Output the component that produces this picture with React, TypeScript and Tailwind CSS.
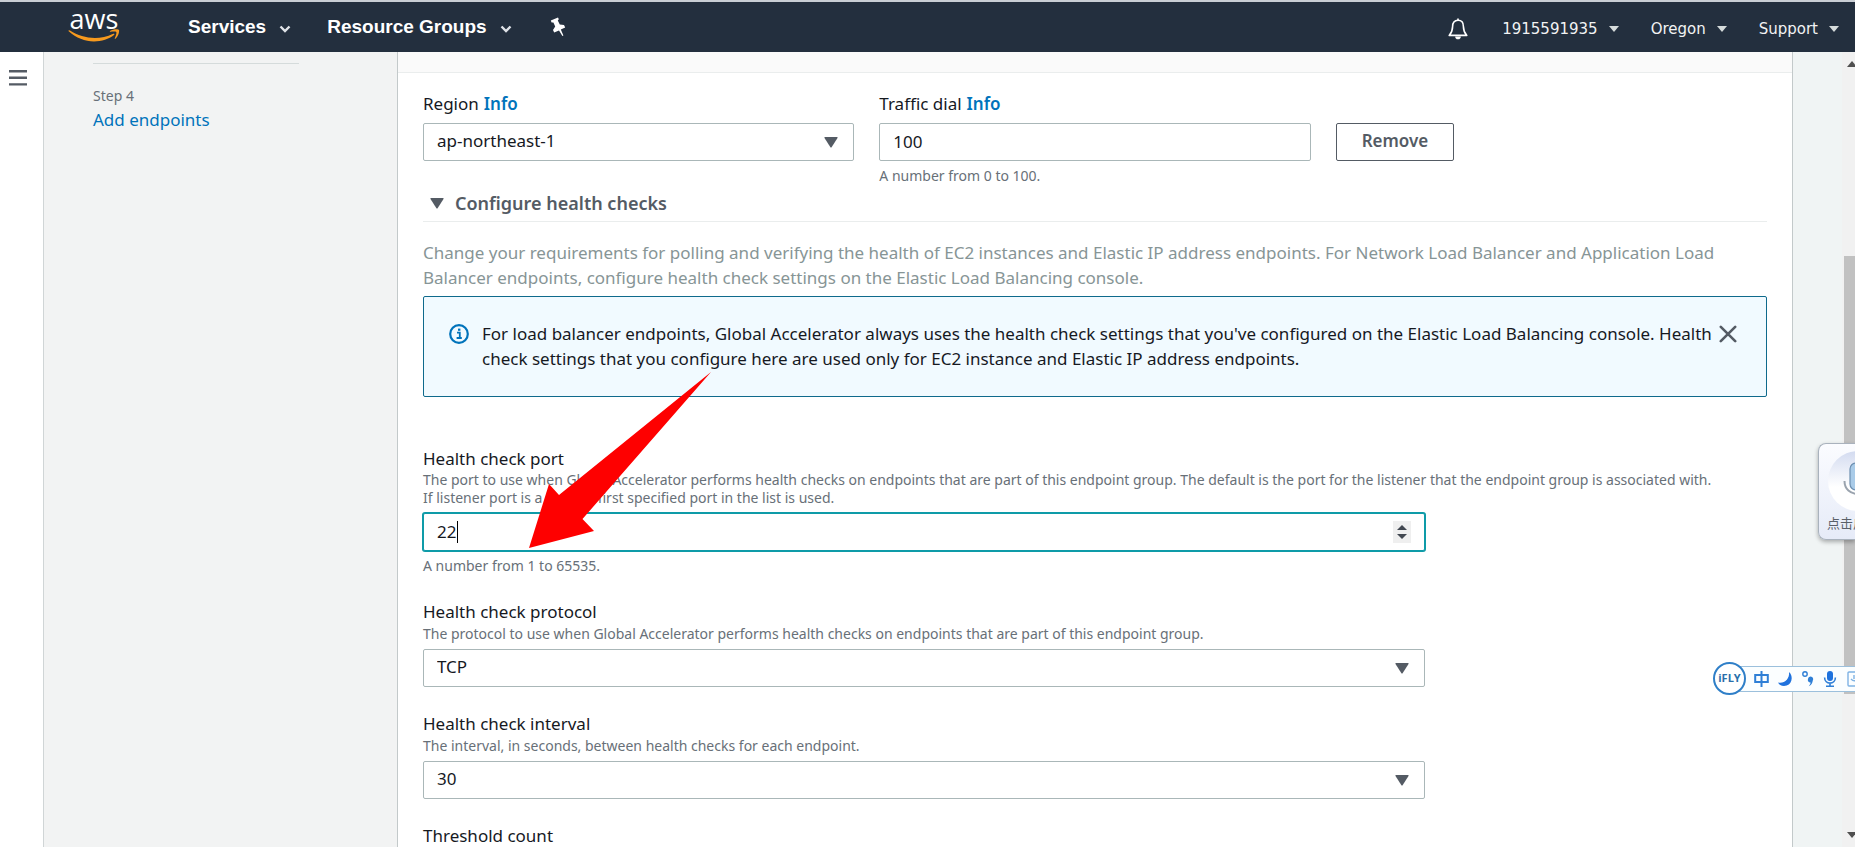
import React, { useState } from "react";
import type { ReactNode } from "react";

function Chevron({ wide = false }: { wide?: boolean }) {
  return wide ? (
    <svg width="12" height="8" viewBox="0 0 12 8" fill="none" stroke="#dfe3e8" strokeWidth="2.4" aria-hidden="true">
      <path d="M1.5 1.5 L6 6 L10.5 1.5" />
    </svg>
  ) : (
    <svg width="10" height="6" viewBox="0 0 10 6" fill="#d5dbdb" aria-hidden="true">
      <path d="M0 0 H10 L5 6 Z" />
    </svg>
  );
}

function Triangle() {
  return (
    <svg width="14" height="11" viewBox="0 0 14 11" fill="#545b64" aria-hidden="true">
      <path d="M1 0 H13 Q14 0 13.5 1 L7.6 10.2 Q7 11 6.4 10.2 L0.5 1 Q0 0 1 0 Z" />
    </svg>
  );
}

function AwsLogo() {
  return (
    <a href="#home" aria-label="AWS home" className="flex w-[52px] flex-col items-center pb-[3px]">
      <span className="font-['Open_Sans','Noto_Sans',sans-serif] text-[27px] leading-[20px] font-medium text-white">aws</span>
      <svg width="52" height="13" viewBox="0 0 52 13" aria-hidden="true">
        <path d="M1 1.2 C0.3 1.4 0.4 2 1 2.6 C8 9 17 12.4 26 12.4 C33.5 12.4 41 10 46 6 C47 5.2 46.2 4.3 45.2 4.8 C39 7.8 33 9 27 9 C18 9 9.5 6.3 2 1.6 Z" fill="#f79a1e" />
        <path d="M42 2 C45 0 50.5 0 51 1 C51.5 2.2 50.5 7.5 47.4 9.8 C46.9 10.2 46.5 10 46.8 9.4 C47.6 7.6 48.9 4 48.3 3.1 C47.7 2.3 44.3 2.6 42.6 2.8 C41.9 2.9 41.6 2.4 42 2 Z" fill="#f79a1e" />
      </svg>
    </a>
  );
}

function TopBar() {
  return (
    <header className="flex h-[52px] shrink-0 items-center border-t-2 border-[#c9ced4] bg-[#232f3e] pr-4 pl-[68px]">
      <AwsLogo />
      <nav className="ml-[68px] flex items-center font-['Liberation_Sans',Arial,sans-serif] text-[19px] font-bold text-white">
        <button type="button" className="flex items-center gap-[13px]">
          Services <span className="pt-1"><Chevron wide /></span>
        </button>
        <button type="button" className="ml-9 flex items-center gap-[13px]">
          Resource Groups <span className="pt-1"><Chevron wide /></span>
        </button>
        <button type="button" aria-label="Pin shortcuts" className="ml-[37px]">
          <svg width="18" height="20" viewBox="0 0 18 20" fill="#ffffff" aria-hidden="true">
            <path d="M1.8 3.6 L9 0.4 L9.8 2.2 L8.8 3.4 L10.8 7.4 L15 8 L16.2 10.6 L11.8 12.6 L14.4 18.4 L13.4 19 L10 13.4 L5.2 15.6 L4 13 L6.2 9.4 L4.4 5.4 L2.6 5.4 Z" />
          </svg>
        </button>
      </nav>
      <div className="ml-auto flex items-center pt-1 font-['DejaVu_Sans',Verdana,sans-serif] text-[15px] text-[#f2f3f3]">
        <button type="button" aria-label="Notifications">
          <svg width="20" height="22" viewBox="0 0 20 22" fill="none" stroke="#ffffff" strokeWidth="1.6" strokeLinejoin="round" aria-hidden="true">
            <path d="M10 2.2 C6.3 2.2 4.6 5 4.6 8.4 C4.6 12.6 3.6 14.6 1.2 17.4 H18.8 C16.4 14.6 15.4 12.6 15.4 8.4 C15.4 5 13.7 2.2 10 2.2 Z" />
            <path d="M10 0.6 V2" />
            <path d="M7.2 18.4 H12.8 A2.8 2.8 0 0 1 7.2 18.4 Z" fill="#ffffff" stroke="none" />
          </svg>
        </button>
        <button type="button" className="ml-[34px] flex items-center gap-[11px]">
          1915591935 <Chevron />
        </button>
        <button type="button" className="ml-8 flex items-center gap-[11px]">
          Oregon <Chevron />
        </button>
        <button type="button" className="ml-8 flex items-center gap-[11px]">
          Support <Chevron />
        </button>
      </div>
    </header>
  );
}

const controlClass =
  "h-[38px] w-full appearance-none rounded-[2px] border border-[#aab7b8] bg-white px-[13px] pb-[2px] text-[17px] text-[#16191f] outline-none";

function SelectBox({ id, options }: { id: string; options: string[] }) {
  return (
    <div className="grid items-center">
      <select id={id} className={`${controlClass} [grid-area:1/1]`}>
        {options.map((o) => (
          <option key={o}>{o}</option>
        ))}
      </select>
      <span className="pointer-events-none mr-4 justify-self-end [grid-area:1/1]">
        <Triangle />
      </span>
    </div>
  );
}

function FieldLabel({ htmlFor, children, info = false }: { htmlFor: string; children: ReactNode; info?: boolean }) {
  return (
    <div className="text-[17px] leading-[25px] text-[#16191f]">
      <label htmlFor={htmlFor}>{children}</label>
      {info && (
        <a href="#info" className="ml-[5px] font-semibold text-[#0073bb]">
          Info
        </a>
      )}
    </div>
  );
}

function Hint({ children }: { children: ReactNode }) {
  return <p className="text-[14px] leading-[18px] text-[#687078]">{children}</p>;
}

function PortInput() {
  const [port, setPort] = useState(22);
  return (
    <div className="relative grid items-center">
      <input
        id="port"
        type="number"
        value={port}
        onChange={(e) => setPort(Number(e.target.value))}
        className="h-[38px] w-full [appearance:textfield] rounded-[2px] border border-[#0e9ba8] bg-white px-[13px] pb-[2px] text-[17px] text-[#16191f] caret-transparent ring-1 ring-[#0e9ba8] outline-none [grid-area:1/1] [&::-webkit-inner-spin-button]:appearance-none"
      />
      <span aria-hidden="true" className="pointer-events-none absolute left-[34px] h-[22px] w-px bg-black" />
      <span className="mr-[14px] flex h-[22px] w-[18px] flex-col items-center justify-center gap-[4px] justify-self-end bg-[#efefef] [grid-area:1/1]">
        <button type="button" aria-label="Increase port" onClick={() => setPort(port + 1)}>
          <svg className="block" width="10" height="5" viewBox="0 0 10 5" fill="#414750">
            <path d="M0 5 L5 0 L10 5 Z" />
          </svg>
        </button>
        <button type="button" aria-label="Decrease port" onClick={() => setPort(port - 1)}>
          <svg className="block" width="10" height="5" viewBox="0 0 10 5" fill="#414750">
            <path d="M0 0 L5 5 L10 0 Z" />
          </svg>
        </button>
      </span>
    </div>
  );
}

function InfoAlert() {
  return (
    <section className="flex items-start rounded-[2px] border border-[#0f6a8c] bg-[#f1faff] pt-6 pr-[29px] pb-[25px] pl-[25px]">
      <svg className="mt-[3px] shrink-0" width="20" height="20" viewBox="0 0 20 20" fill="none" aria-hidden="true">
        <circle cx="10" cy="10" r="8.8" stroke="#0073bb" strokeWidth="2.2" />
        <path d="M8 8.6 H10.8 V13.6 M7.6 14 H12.8" stroke="#0073bb" strokeWidth="1.8" />
        <rect x="9" y="4.6" width="2.4" height="2.2" fill="#0073bb" />
      </svg>
      <p className="ml-[13px] grow text-[17px] leading-[25px] text-[#16191f]">
        For load balancer endpoints, Global Accelerator always uses the health check settings that you've configured on the Elastic Load Balancing console. Health
        <br />
        check settings that you configure here are used only for EC2 instance and Elastic IP address endpoints.
      </p>
      <button type="button" aria-label="Dismiss" className="mt-1 shrink-0">
        <svg className="block" width="18" height="18" viewBox="0 0 18 18" stroke="#545b64" strokeWidth="2.6" strokeLinecap="round">
          <path d="M1.8 1.8 L16.2 16.2 M16.2 1.8 L1.8 16.2" />
        </svg>
      </button>
    </section>
  );
}

function EndpointForm() {
  return (
    <main className="min-w-0 grow overflow-hidden border-x border-[#c3c9ca] bg-white">
      <div className="h-[21px] border-b border-[#eaeded] bg-[#fafafa]" />
      <div className="px-[25px] pt-[18px]">
        <div className="grid grid-cols-3 gap-x-[25px]">
          <div>
            <FieldLabel htmlFor="region" info>Region</FieldLabel>
            <div className="mt-[7px]">
              <SelectBox id="region" options={["ap-northeast-1", "us-west-2"]} />
            </div>
          </div>
          <div>
            <FieldLabel htmlFor="dial" info>Traffic dial</FieldLabel>
            <input id="dial" type="text" defaultValue="100" className={`${controlClass} mt-[7px]`} />
            <div className="mt-[6px]">
              <Hint>A number from 0 to 100.</Hint>
            </div>
          </div>
          <div className="pt-8">
            <button type="button" className="h-[38px] rounded-[2px] border border-[#545b64] px-[25px] pb-[2px] text-[17px] font-semibold text-[#545b64]">
              Remove
            </button>
          </div>
        </div>

        <button type="button" className="mt-[6px] flex h-[31px] w-full items-center gap-[11px] border-b border-[#eaeded] pb-[5px] pl-[7px] text-[18px] leading-[25px] font-semibold text-[#545b64]">
          <Triangle />
          Configure health checks
        </button>
        <p className="mt-[18px] mb-[6px] text-[17px] leading-[25px] text-[#879596]">
          Change your requirements for polling and verifying the health of EC2 instances and Elastic IP address endpoints. For Network Load Balancer and Application Load
          <br />
          Balancer endpoints, configure health check settings on the Elastic Load Balancing console.
        </p>
        <InfoAlert />

        <div className="mt-[49px]">
          <FieldLabel htmlFor="port">Health check port</FieldLabel>
          <Hint>
            The port to use when Global Accelerator performs health checks on endpoints that are part of this endpoint group. The default is the port for the listener that the endpoint group is associated with.
            <br />
            If listener port is a list, the first specified port in the list is used.
          </Hint>
          <div className="mt-[6px] w-3/4 pr-[6px]">
            <PortInput />
          </div>
          <div className="mt-[6px]">
            <Hint>A number from 1 to 65535.</Hint>
          </div>
        </div>

        <div className="mt-6">
          <FieldLabel htmlFor="protocol">Health check protocol</FieldLabel>
          <div className="mt-px">
            <Hint>The protocol to use when Global Accelerator performs health checks on endpoints that are part of this endpoint group.</Hint>
          </div>
          <div className="mt-[6px] w-3/4 pr-[6px]">
            <SelectBox id="protocol" options={["TCP", "HTTP", "HTTPS"]} />
          </div>
        </div>

        <div className="mt-6">
          <FieldLabel htmlFor="interval">Health check interval</FieldLabel>
          <div className="mt-px">
            <Hint>The interval, in seconds, between health checks for each endpoint.</Hint>
          </div>
          <div className="mt-[6px] w-3/4 pr-[6px]">
            <SelectBox id="interval" options={["30", "10"]} />
          </div>
        </div>

        <div className="mt-6">
          <FieldLabel htmlFor="threshold">Threshold count</FieldLabel>
          <div className="mt-[6px] w-3/4 pr-[6px]">
            <input id="threshold" type="text" defaultValue="3" className={controlClass} />
          </div>
        </div>
      </div>
    </main>
  );
}

function ScrollTrack() {
  return (
    <div aria-hidden="true" className="flex w-[13px] shrink-0 flex-col items-end overflow-hidden bg-[#f1f1f1]">
      <svg className="mt-[9px] shrink-0" width="8" height="6" viewBox="0 0 8 6" fill="#505050">
        <path d="M0 6 L5 0 L10 6 Z" />
      </svg>
      <div className="mt-[189px] h-[438px] w-[11px] shrink-0 bg-[#c1c1c1]" />
      <svg className="mt-auto mb-[9px] shrink-0" width="8" height="6" viewBox="0 0 8 6" fill="#505050">
        <path d="M0 0 L5 6 L10 0 Z" />
      </svg>
    </div>
  );
}

function PointerArrow() {
  return (
    <svg className="pointer-events-none absolute top-[372px] left-[529px]" width="183" height="176" viewBox="0 0 183 176" fill="#fe0000" aria-hidden="true">
      <path d="M0 176 L20 112 L30 123 L182 0 L53.5 147 L65 159 Z" />
    </svg>
  );
}

function VoiceWidget() {
  return (
    <div className="absolute top-[443px] right-0 flex h-[97px] w-[37px] flex-col overflow-hidden rounded-l-[8px] border border-r-0 border-[#a9b2bd] bg-linear-to-b from-[#fbfcff] to-[#e6ebf8] shadow-[0_2px_4px_rgba(0,0,0,0.3)]">
      <svg className="mt-1 ml-2 shrink-0" width="28" height="66" viewBox="0 0 28 66" aria-hidden="true">
        <defs>
          <linearGradient id="disc" x1="0" y1="0" x2="0" y2="1">
            <stop offset="0" stopColor="#d3dbf0" />
            <stop offset="0.6" stopColor="#ffffff" />
          </linearGradient>
        </defs>
        <circle cx="31" cy="33" r="30" fill="url(#disc)" />
        <rect x="23" y="15" width="16" height="27" rx="6" fill="#a9cbe8" stroke="#6d8fb0" strokeWidth="1.2" />
        <path d="M17.5 33 C17.5 41 23 46 32 46" fill="none" stroke="#9aa3ae" strokeWidth="2" />
      </svg>
      <span className="ml-2 font-['Noto_Sans_CJK_SC',sans-serif] text-[13px] leading-[18px] whitespace-nowrap text-[#5a6069]">点击启</span>
    </div>
  );
}

function InputMethodBar() {
  return (
    <div className="absolute top-[662px] right-0 flex w-[142px] items-center overflow-hidden text-[#2f7fd6]">
      <span className="z-10 flex size-[33px] shrink-0 items-center justify-center rounded-full border-[2px] border-[#2f7fc8] bg-white font-['Open_Sans',sans-serif] text-[11px] font-bold text-[#2a6faa]">
        iFLY
      </span>
      <div className="-ml-3 flex h-[26px] grow items-center border-y border-[#9cc0dc] bg-[#fbfeff] pl-5">
        <svg className="shrink-0" width="118" height="18" viewBox="0 0 118 18" fill="none" aria-hidden="true">
          <path d="M1.2 5 H13.8 V12 H1.2 Z M7.5 1 V17" stroke="#2f7fd6" strokeWidth="2" />
          <path d="M35 2 C40 6 38 16 30 16 C27 16 25 14.5 24 12.5 C30 14 36 9 35 2 Z" fill="#1f72dd" />
          <circle cx="51" cy="4" r="2.2" stroke="#2f7fd6" strokeWidth="1.4" />
          <path d="M54 9 A2.6 2.6 0 1 1 58.8 10.6 Q58.4 14.6 54.8 16.2 Q56.8 13.8 56.6 12.6 A2.6 2.6 0 0 1 54 9 Z" fill="#2f7fd6" />
          <rect x="73" y="1" width="6" height="10" rx="3" fill="#1f72dd" />
          <path d="M70.6 7.5 C70.6 15 81.4 15 81.4 7.5 M76 13 V16 M72 16.2 H80" stroke="#2f7fd6" strokeWidth="1.6" />
          <rect x="94" y="2" width="16" height="14" rx="1" stroke="#7fb2e4" strokeWidth="1.4" />
          <path d="M97 9 Q100 12 102 10 M100 5 V9" stroke="#7fb2e4" strokeWidth="1.4" />
        </svg>
      </div>
    </div>
  );
}

export default function App() {
  return (
    <div className="relative flex h-screen flex-col overflow-hidden bg-[#f2f3f3] font-['Noto_Sans','Open_Sans',sans-serif]">
      <TopBar />
      <div className="flex min-h-0 grow">
        <aside className="w-11 shrink-0 border-r border-[#d0d5d6] bg-white pt-[18px] pl-[9px]">
          <button type="button" aria-label="Open navigation" className="block">
            <svg className="block" width="18" height="16" viewBox="0 0 18 16" fill="#545b64">
              <path d="M0 0 H18 V2.4 H0 Z M0 6.6 H18 V9 H0 Z M0 13.2 H18 V15.6 H0 Z" />
            </svg>
          </button>
        </aside>
        <nav aria-label="Steps" className="w-[353px] shrink-0 pl-[49px]">
          <div className="h-3 w-[206px] border-b border-[#d5dbdb]" />
          <div className="mt-[23px]">
            <Hint>Step 4</Hint>
          </div>
          <a href="#endpoints" className="mt-[2px] block text-[17px] leading-[25px] text-[#0073bb]">
            Add endpoints
          </a>
        </nav>
        <EndpointForm />
        <div className="w-[49px] shrink-0 bg-[#f0f4f4]" />
        <ScrollTrack />
      </div>
      <PointerArrow />
      <VoiceWidget />
      <InputMethodBar />
    </div>
  );
}
